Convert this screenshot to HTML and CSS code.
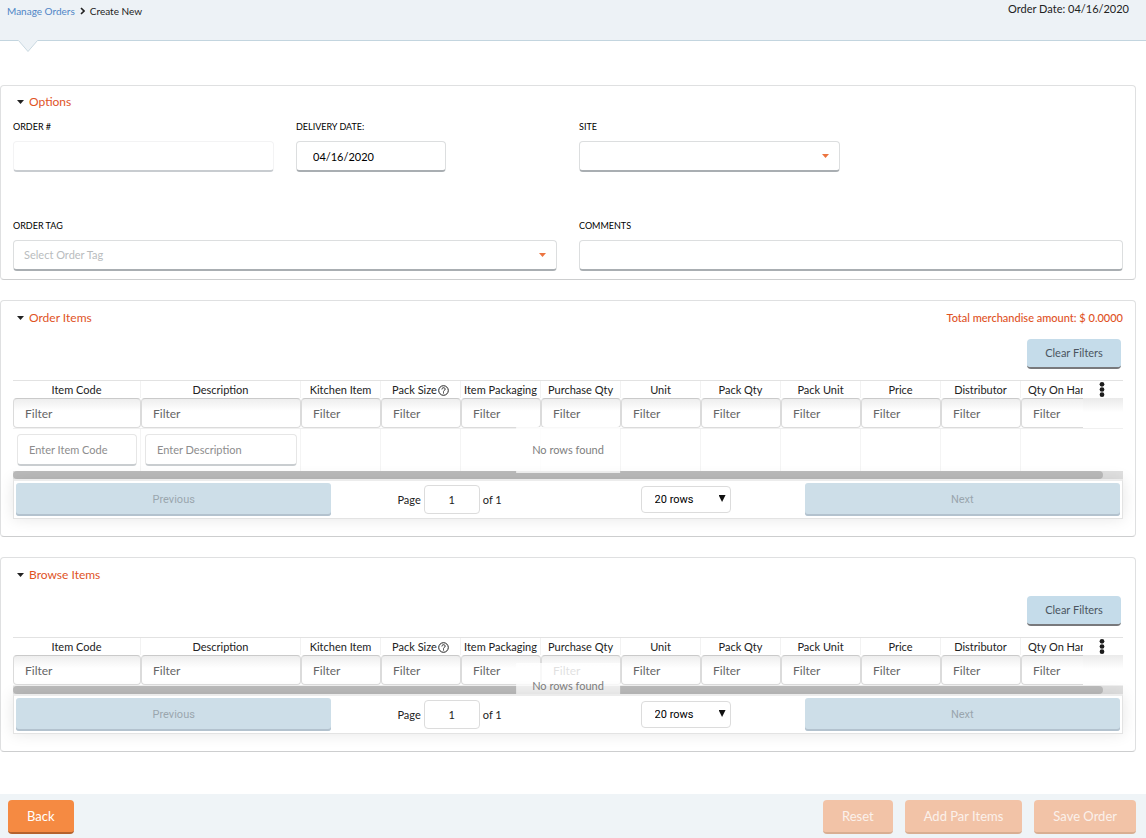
FILE: index.html
```
<!DOCTYPE html>
<html lang="en">
<head>
<meta charset="utf-8">
<meta name="viewport" content="width=device-width, initial-scale=1">
<title>Create New Order</title>
<link rel="stylesheet" href="styles.css">
</head>
<body>
<header class="topbar">
  <nav class="crumbs" aria-label="Breadcrumb">
    <a href="#orders">Manage Orders</a>
    <svg class="crumb-sep" viewBox="0 0 5 8" aria-hidden="true"><path d="M1 1l3 3-3 3" fill="none" stroke="#222" stroke-width="1.6"/></svg>
    <span>Create New</span>
  </nav>
  <p class="order-date">Order Date: 04/16/2020</p>
  <svg class="notch" viewBox="0 0 20 12" aria-hidden="true"><path d="M0 0h20L10 11.500z" fill="#edf2f6"/><path d="M.5.500L10 11.500 19.500.500" fill="none" stroke="#c9d8e0"/></svg>
</header>

<main class="content">
  <section class="panel options">
    <div class="panel-head">
      <button type="button" class="toggle"><span class="tri"></span>Options</button>
    </div>
    <form class="fields">
      <div class="field">
        <label for="order-no">ORDER #</label>
        <input id="order-no" class="control" type="text" disabled>
      </div>
      <div class="field">
        <label for="delivery">DELIVERY DATE:</label>
        <input id="delivery" class="control date" type="text" value="04/16/2020">
      </div>
      <div class="field site">
        <label for="site">SITE</label>
        <div class="drop"><select id="site" class="control"><option></option></select></div>
      </div>
      <div class="field wide">
        <label for="tag">ORDER TAG</label>
        <div class="drop"><select id="tag" class="control empty"><option>Select Order Tag</option></select></div>
      </div>
      <div class="field wide">
        <label for="comments">COMMENTS</label>
        <input id="comments" class="control" type="text">
      </div>
    </form>
  </section>

  <section class="panel items">
    <div class="panel-head">
      <button type="button" class="toggle"><span class="tri"></span>Order Items</button>
      <strong class="total">Total merchandise amount: $ 0.0000</strong>
    </div>
    <div class="tools"><button type="button" class="clear">Clear Filters</button></div>
    <div class="grid">
      <table>
        <colgroup><col class="c-code"><col class="c-desc"><col span="9" class="c-std"><col><col class="c-menu"></colgroup>
        <thead>
          <tr class="titles">
            <th>Item Code</th><th>Description</th><th>Kitchen Item</th>
            <th>Pack Size<svg class="help" viewBox="0 0 11 11" role="img" aria-label="Help"><circle cx="5.500" cy="5.500" r="4.800"/><path d="M3.900 4.400c0-2.300 3.300-2.100 3.300-.2 0 1.200-1.700 1.100-1.700 2.400M5.500 7.300v1.200"/></svg></th>
            <th>Item Packaging</th><th>Purchase Qty</th><th>Unit</th><th>Pack Qty</th><th>Pack Unit</th><th>Price</th><th>Distributor</th><th class="cut">Qty On Hand</th>
            <th class="menu"><button type="button" aria-label="Columns"><svg viewBox="0 0 6 18" aria-hidden="true"><circle cx="3" cy="3.500" r="2.500"/><circle cx="3" cy="9" r="2.500"/><circle cx="3" cy="14.500" r="2.500"/></svg></button></th>
          </tr>
          <tr class="filters">
            <td><input type="text" placeholder="Filter" aria-label="Filter Item Code"></td>
            <td><input type="text" placeholder="Filter" aria-label="Filter Description"></td>
            <td><input type="text" placeholder="Filter" aria-label="Filter Kitchen Item"></td>
            <td><input type="text" placeholder="Filter" aria-label="Filter Pack Size"></td>
            <td><input type="text" placeholder="Filter" aria-label="Filter Item Packaging"></td>
            <td><input type="text" placeholder="Filter" aria-label="Filter Purchase Qty"></td>
            <td><input type="text" placeholder="Filter" aria-label="Filter Unit"></td>
            <td><input type="text" placeholder="Filter" aria-label="Filter Pack Qty"></td>
            <td><input type="text" placeholder="Filter" aria-label="Filter Pack Unit"></td>
            <td><input type="text" placeholder="Filter" aria-label="Filter Price"></td>
            <td><input type="text" placeholder="Filter" aria-label="Filter Distributor"></td>
            <td><input class="open" type="text" placeholder="Filter" aria-label="Filter Qty On Hand"></td>
            <td class="blank"></td>
          </tr>
        </thead>
        <tbody>
          <tr class="entry">
            <td><input type="text" placeholder="Enter Item Code" aria-label="Item Code"></td>
            <td><input type="text" placeholder="Enter Description" aria-label="Description"></td>
            <td></td><td></td><td></td><td></td><td></td><td></td><td></td><td></td><td></td><td class="last"></td><td class="last"></td>
          </tr>
        </tbody>
      </table>
      <div class="scroll"><div class="thumb"></div></div>
      <p class="no-rows">No rows found</p>
      <div class="pager">
        <button type="button" class="page-btn" disabled>Previous</button>
        <div class="page-mid">
          <label class="page-no">Page <input type="text" value="1"> of 1</label>
          <div class="rows"><select aria-label="Rows per page"><option>20 rows</option></select></div>
        </div>
        <button type="button" class="page-btn" disabled>Next</button>
      </div>
    </div>
  </section>

  <section class="panel items">
    <div class="panel-head">
      <button type="button" class="toggle"><span class="tri"></span>Browse Items</button>
    </div>
    <div class="tools"><button type="button" class="clear">Clear Filters</button></div>
    <div class="grid">
      <table>
        <colgroup><col class="c-code"><col class="c-desc"><col span="9" class="c-std"><col><col class="c-menu"></colgroup>
        <thead>
          <tr class="titles">
            <th>Item Code</th><th>Description</th><th>Kitchen Item</th>
            <th>Pack Size<svg class="help" viewBox="0 0 11 11" role="img" aria-label="Help"><circle cx="5.500" cy="5.500" r="4.800"/><path d="M3.900 4.400c0-2.300 3.300-2.100 3.300-.2 0 1.200-1.700 1.100-1.700 2.400M5.500 7.300v1.200"/></svg></th>
            <th>Item Packaging</th><th>Purchase Qty</th><th>Unit</th><th>Pack Qty</th><th>Pack Unit</th><th>Price</th><th>Distributor</th><th class="cut">Qty On Hand</th>
            <th class="menu"><button type="button" aria-label="Columns"><svg viewBox="0 0 6 18" aria-hidden="true"><circle cx="3" cy="3.500" r="2.500"/><circle cx="3" cy="9" r="2.500"/><circle cx="3" cy="14.500" r="2.500"/></svg></button></th>
          </tr>
          <tr class="filters">
            <td><input type="text" placeholder="Filter" aria-label="Filter Item Code"></td>
            <td><input type="text" placeholder="Filter" aria-label="Filter Description"></td>
            <td><input type="text" placeholder="Filter" aria-label="Filter Kitchen Item"></td>
            <td><input type="text" placeholder="Filter" aria-label="Filter Pack Size"></td>
            <td><input type="text" placeholder="Filter" aria-label="Filter Item Packaging"></td>
            <td><input type="text" placeholder="Filter" aria-label="Filter Purchase Qty"></td>
            <td><input type="text" placeholder="Filter" aria-label="Filter Unit"></td>
            <td><input type="text" placeholder="Filter" aria-label="Filter Pack Qty"></td>
            <td><input type="text" placeholder="Filter" aria-label="Filter Pack Unit"></td>
            <td><input type="text" placeholder="Filter" aria-label="Filter Price"></td>
            <td><input type="text" placeholder="Filter" aria-label="Filter Distributor"></td>
            <td><input class="open" type="text" placeholder="Filter" aria-label="Filter Qty On Hand"></td>
            <td class="blank"></td>
          </tr>
        </thead>
      </table>
      <div class="scroll"><div class="thumb"></div></div>
      <p class="no-rows">No rows found</p>
      <div class="pager">
        <button type="button" class="page-btn" disabled>Previous</button>
        <div class="page-mid">
          <label class="page-no">Page <input type="text" value="1"> of 1</label>
          <div class="rows"><select aria-label="Rows per page"><option>20 rows</option></select></div>
        </div>
        <button type="button" class="page-btn" disabled>Next</button>
      </div>
    </div>
  </section>
</main>

<footer class="actions">
  <button type="button" class="action back">Back</button>
  <button type="button" class="action" disabled>Reset</button>
  <button type="button" class="action" disabled>Add Par Items</button>
  <button type="button" class="action" disabled>Save Order</button>
</footer>
</body>
</html>
```
FILE: styles.css
```
* { box-sizing: border-box; }

body {
  margin: 0;
  min-height: 100vh;
  display: flex;
  flex-direction: column;
  background: #fff;
  color: #222;
  font: 11px/16px Lato, "Liberation Sans", sans-serif;
}

button, input, select { font: inherit; color: inherit; margin: 0; }
button { border: 0; padding: 0; background: none; }
p { margin: 0; }

/* Top bar */
.topbar {
  position: relative;
  display: flex;
  justify-content: space-between;
  height: 41px;
  padding: 0 17px 0 7px;
  background: #edf2f6;
  border-bottom: 1px solid #c3d5df;
}
.crumbs {
  display: flex;
  align-items: center;
  gap: 5px;
  height: 21px;
  font-size: 10px;
}
.crumbs a { color: #4f86c6; text-decoration: none; }
.crumb-sep { width: 5px; height: 8px; }
.order-date { line-height: 18px; }
.notch { position: absolute; left: 18px; top: 40px; width: 20px; height: 12px; }

/* Panels */
.content {
  display: flex;
  flex-direction: column;
  gap: 20px;
  padding: 44px 10px 20px 0;
}
.panel {
  padding: 8px 12px;
  border: 1px solid #dfe0e1;
  border-bottom-color: #cdcecf;
  border-radius: 4px;
}
.items { padding: 9px 12px 17px; }
.panel-head { display: flex; justify-content: space-between; line-height: 16px; }
.toggle {
  display: flex;
  align-items: center;
  gap: 5px;
  padding-left: 4px;
  color: #e0531f;
  font-size: 12px;
}
.tri { width: 7px; height: 4px; background: #222; clip-path: polygon(0 0, 100% 0, 50% 100%); }
.total { color: #e0531f; font-weight: 500; }

/* Options form */
.fields {
  display: grid;
  grid-template-columns: repeat(4, 1fr);
  gap: 47px 22px;
  padding-top: 10px;
}
.field { display: flex; flex-direction: column; gap: 7px; }
.field label { font-size: 9px; line-height: 14px; color: #000; }
.site, .wide { grid-column-end: span 2; }
.site .drop { width: calc(50% - 11px); }
.drop { position: relative; }
.drop::after {
  content: "";
  position: absolute;
  right: 11px;
  top: 13px;
  width: 7px;
  height: 4px;
  background: #ec7440;
  clip-path: polygon(0 0, 100% 0, 50% 100%);
}
.control {
  appearance: none;
  width: 100%;
  height: 31px;
  padding: 0 10px;
  border: 1px solid #dcdedf;
  border-bottom: 2px solid #a9aeb2;
  border-radius: 4px;
  background: #fff;
}
.control:disabled { border-color: #f3f3f4; border-bottom-color: #c8ccd0; }
.control.date { width: 150px; padding: 0 16px; color: #000; }
.control.empty { color: #b9bcbe; }

/* Item tables */
.tools { display: flex; justify-content: flex-end; padding: 13px 2px 11px; }
.clear {
  width: 94px;
  height: 30px;
  border-bottom: 2px solid #78797c;
  border-radius: 4px;
  background: #c5dcea;
  color: #4b5560;
}
.grid { position: relative; }
table {
  width: 100%;
  table-layout: fixed;
  border-spacing: 0;
  border-top: 1px solid #e2e2e2;
}
.c-code { width: 128px; }
.c-desc { width: 160px; }
.c-std { width: 80px; }
.c-menu { width: 40px; }
th, td { padding: 0; font-weight: 400; }
.titles th {
  height: 17px;
  line-height: 17px;
  border-right: 1px solid #f2f2f2;
  white-space: nowrap;
  overflow: hidden;
}
.titles .cut { padding-left: 7px; text-align: left; border-right: 0; }
.titles .menu { border-right: 0; padding-right: 3px; }
.menu button { display: block; margin: 0 auto; width: 6px; height: 17px; }
.menu svg { display: block; width: 6px; height: 17px; fill: #1c1c1c; }
.help { width: 11px; height: 11px; margin-left: 1px; vertical-align: -2px; fill: none; stroke: #222; }
.filters td { height: 31px; border-bottom: 1px solid #f0f0f0; vertical-align: top; }
.filters input {
  display: block;
  width: 100%;
  height: 30px;
  padding: 0 11px;
  border: 1px solid #dbdbdb;
  border-top-color: #cacaca;
  border-radius: 4px;
  background: linear-gradient(#eee, #fff 12px);
  font-size: 12px;
}
.filters .open { border-right: 0; border-radius: 4px 0 0 4px; }
.filters .blank { background: linear-gradient(#eaeaea, #fff 14px); }
input::placeholder { opacity: 1; }
.filters input::placeholder { color: #666; }
.entry td { height: 42px; padding: 5px 4px; border-right: 1px solid #f4f4f4; }
.entry td:nth-child(-n+2) { padding-right: 3px; }
.entry td.last { border-right: 0; }
.entry input {
  display: block;
  width: 100%;
  height: 32px;
  padding: 0 11px;
  border: 1px solid #e6e6e6;
  border-bottom: 2px solid #c9cdd0;
  border-radius: 4px;
}
.entry input::placeholder { color: #8d8d8d; }
.scroll { height: 8px; background: #e0e0e0; }
.thumb { width: calc(100% - 20px); height: 8px; border-radius: 4px; background: #bbb; }
.no-rows {
  position: absolute;
  left: 50%;
  top: 50%;
  transform: translate(-50%, -50%);
  padding: 15px 16px;
  background: rgba(255, 255, 255, .8);
  color: #808080;
  white-space: nowrap;
}

/* Pager */
.pager {
  position: relative;
  display: grid;
  grid-template-columns: 2fr 3fr 2fr;
  height: 40px;
  padding: 2px;
  border: 1px solid #e3e3e3;
  border-top: 2px solid #ececec;
  background: #fff;
  box-shadow: 0 0 15px rgba(0, 0, 0, .1);
}
.page-btn {
  height: 33px;
  border-radius: 3px;
  background: #cddee8;
  box-shadow: inset 0 -2px #b3c2ce;
  color: #9aa6ae;
  font: 11px/16px Roboto, "Liberation Sans", sans-serif;
}
.page-mid {
  display: flex;
  justify-content: space-between;
  align-items: center;
  padding: 0 74px 0 66px;
}
.page-no { display: flex; align-items: center; gap: 3px; }
.page-no input {
  width: 56px;
  height: 29px;
  border: 1px solid #dcdcdc;
  border-radius: 4px;
  text-align: center;
}
.rows { position: relative; }
.rows select {
  appearance: none;
  width: 90px;
  height: 27px;
  padding: 0 13px;
  border: 1px solid #dcdcdc;
  border-radius: 4px;
  background: #fff;
  color: #000;
  font: 11px/16px Roboto, "Liberation Sans", sans-serif;
}
.rows::after {
  content: "";
  position: absolute;
  right: 5px;
  top: 9px;
  width: 7px;
  height: 7px;
  background: #111;
  clip-path: polygon(0 0, 100% 0, 50% 100%);
}

/* Footer */
.actions {
  display: flex;
  align-items: flex-start;
  gap: 12px;
  height: 44px;
  margin-top: auto;
  padding: 6px 10px 4px 8px;
  background: #eff4f7;
}
.action {
  height: 34px;
  padding: 0 19px;
  border-bottom: 2px solid #d9ae92;
  border-radius: 4px;
  background: #f2c3a7;
  color: #fbf1eb;
  font-size: 13px;
}
.back {
  margin-right: auto;
  border-bottom-color: #b5622d;
  background: #f58a42;
  color: #fff;
}
```
